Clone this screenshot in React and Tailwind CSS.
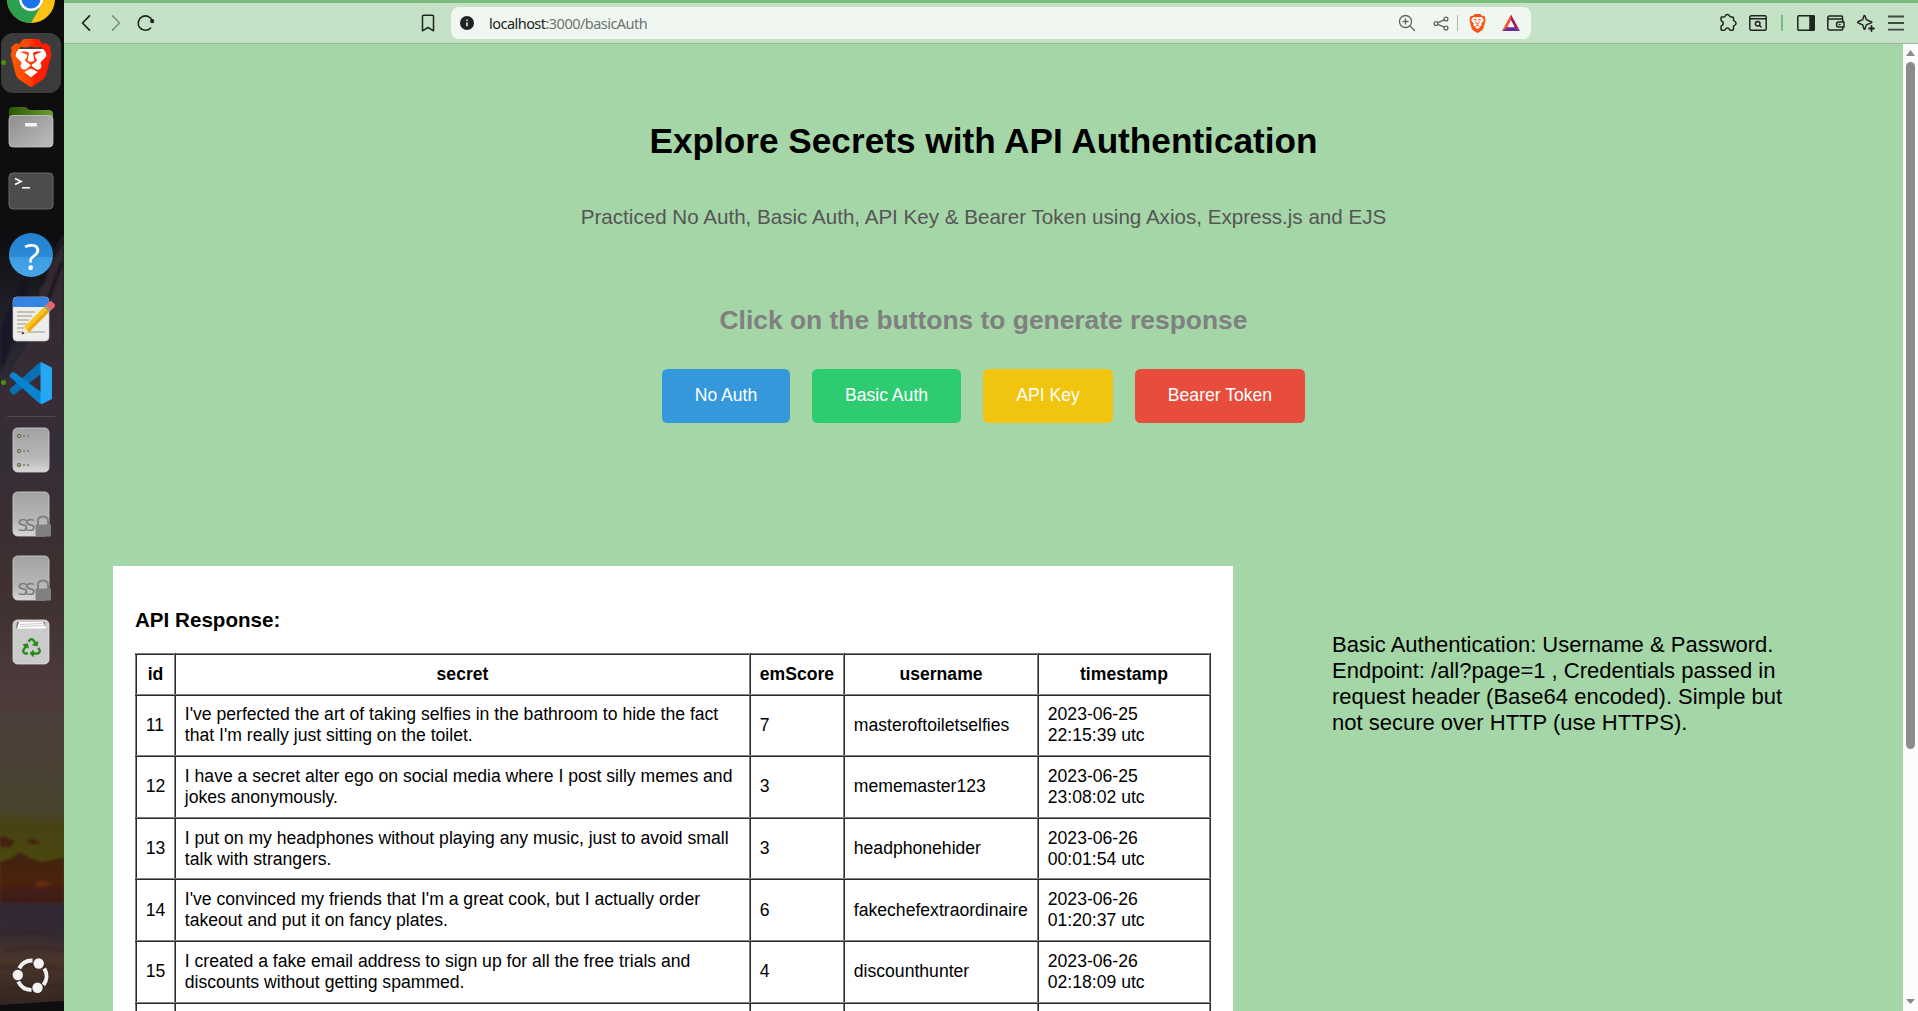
import { SiBrave } from "react-icons/si";
import { FaRecycle } from "react-icons/fa";

const ROWS = [
  { id: 11, secret: "I've perfected the art of taking selfies in the bathroom to hide the fact that I'm really just sitting on the toilet.", score: 7, user: "masteroftoiletselfies", date: "2023-06-25", time: "22:15:39 utc" },
  { id: 12, secret: "I have a secret alter ego on social media where I post silly memes and jokes anonymously.", score: 3, user: "mememaster123", date: "2023-06-25", time: "23:08:02 utc" },
  { id: 13, secret: "I put on my headphones without playing any music, just to avoid small talk with strangers.", score: 3, user: "headphonehider", date: "2023-06-26", time: "00:01:54 utc" },
  { id: 14, secret: "I've convinced my friends that I'm a great cook, but I actually order takeout and put it on fancy plates.", score: 6, user: "fakechefextraordinaire", date: "2023-06-26", time: "01:20:37 utc" },
  { id: 15, secret: "I created a fake email address to sign up for all the free trials and discounts without getting spammed.", score: 4, user: "discounthunter", date: "2023-06-26", time: "02:18:09 utc" },
];

const BUTTONS = [
  { label: "No Auth", style: "bg-[#3498db] w-[128px]" },
  { label: "Basic Auth", style: "bg-[#2ecc71] w-[149px]" },
  { label: "API Key", style: "bg-[#f1c40f] w-[130px]" },
  { label: "Bearer Token", style: "bg-[#e74c3c] w-[170px]" },
];

/* ---------- dock ---------- */

function DockSlot({ active, running, children }) {
  return (
    <div className="relative flex h-16 w-[62px] shrink-0 items-center justify-center">
      {active && <div className="absolute left-px top-[2px] h-[60px] w-[60px] rounded-[12px] bg-[#3c3c3c]" />}
      {running && <div className="absolute left-[1px] top-[29px] h-[5px] w-[5px] rounded-full bg-[#4e8c0a]" />}
      <div className="relative flex">{children}</div>
    </div>
  );
}

function ChromeIcon() {
  return (
    <svg width="48" height="48" viewBox="0 0 48 48">
      <circle cx="24" cy="24" r="24" fill="#fbc116" />
      <path d="M24 24 3.2 12A24 24 0 0 0 24 48L34.4 30Z" fill="#2da04e" />
      <path d="M24 24 3.2 12A24 24 0 0 1 44.8 12H24Z" fill="#e33b2e" />
      <circle cx="24" cy="24" r="12" fill="#fff" />
      <circle cx="24" cy="24" r="9.5" fill="#1a73e8" />
    </svg>
  );
}

function BraveDockIcon() {
  return (
    <div className="relative flex">
      <svg width="0" height="0" className="absolute">
        <defs>
          <linearGradient id="brave-shield" x1="0" x2="1">
            <stop offset="0.1" stopColor="#ff5500" />
            <stop offset="0.45" stopColor="#ff4505" />
            <stop offset="0.6" stopColor="#ff2200" />
            <stop offset="1" stopColor="#ff1a00" />
          </linearGradient>
        </defs>
      </svg>
      <svg className="absolute left-0 top-0" width="48" height="48" viewBox="0 0 48 48">
        <path d="M10 10H38L40 18 35 38 24 44 13 38 8 18Z" fill="#fff" />
      </svg>
      <SiBrave size={48} className="relative" style={{ fill: "url(#brave-shield)" }} />
    </div>
  );
}

function FilesIcon() {
  return (
    <svg width="46" height="42" viewBox="0 0 46 42">
      <defs>
        <linearGradient id="folder-front" x1="0" y1="0" x2="1" y2="1">
          <stop stopColor="#8e8e8e" />
          <stop offset="1" stopColor="#bdbdbd" />
        </linearGradient>
        <linearGradient id="folder-back" x1="0" x2="1">
          <stop stopColor="#2e5702" />
          <stop offset="1" stopColor="#6c9c34" />
        </linearGradient>
      </defs>
      <path d="M1 5Q1 1 5 1H16Q19 1 20 3 21 4 23 4H41Q45 4 45 8V20H1Z" fill="url(#folder-back)" />
      <rect x="1" y="9.500" width="44" height="31.500" rx="4" fill="url(#folder-front)" stroke="#c9c9c9" strokeWidth=".8" />
      <rect x="17" y="17" width="12" height="3.500" rx="1" fill="#f4f4f4" />
    </svg>
  );
}

function TerminalIcon() {
  return (
    <svg width="46" height="38" viewBox="0 0 46 38">
      <rect x="1" y="1" width="44" height="36" rx="4" fill="#4c4c4c" stroke="#686868" />
      <path d="M7 6.500 13 9.500 7 12.500" fill="none" stroke="#fff" strokeWidth="1.700" />
      <path d="M14 15.800H22" stroke="#fff" strokeWidth="1.500" />
    </svg>
  );
}

function HelpIcon() {
  return (
    <div className="flex h-11 w-11 items-center justify-center rounded-full bg-[linear-gradient(#2280d0_0%,#2b8bd8_54%,#3c9de2_55%,#47a6e6_100%)] pl-[2px] font-['Open_Sans','Noto_Sans',sans-serif] text-[37px] leading-none text-white">
      ?
    </div>
  );
}

function NotesIcon() {
  return (
    <svg width="48" height="46" viewBox="0 0 48 46">
      <rect x="6" y="1" width="36" height="44" rx="4" fill="#ededed" stroke="#c8c8c8" strokeWidth=".7" />
      <path d="M6 11V5Q6 1 10 1H38Q42 1 42 5V11Z" fill="#3584e4" />
      <path d="M10 16H28M10 20H25M10 24H22M10 28H20M10 32H17M10 36H38" stroke="#c5c1b5" strokeWidth="1.800" />
      <path d="M15 38 17 31 22 36Z" fill="#fbe3bd" />
      <path d="M17 31 37.500 10.500 42.500 15.500 22 36Z" fill="#f7c920" />
      <path d="M20 33.500 40 13.500 42.500 15.500 22 36Z" fill="#e9a80f" />
      <path d="M37 11 40 8 45 13 42 16Z" fill="#9a9996" />
      <path d="M39 9 42 6Q44 4.500 46 6.500L47 7.500Q49 9.500 47 11.500L44.500 14Z" fill="#ed6166" />
      <path d="M14.500 38.500 15.600 35.500 17.600 37.500Z" fill="#333" />
    </svg>
  );
}

function CodeIcon() {
  return (
    <svg width="44" height="44" viewBox="0 0 44 44">
      <path d="M32 1.500V13L5.500 33.500Q4 34 3 33L1 30.500Q0 29 1.500 27.500L30 2Z" fill="#0a6fb3" />
      <path d="M32 42.500V31L5.500 11.500Q4 10.500 3 11.500L1 13.500Q0 15 1.500 16.500L30 42Z" fill="#0884d0" />
      <path d="M32 1Q31.500 1 31.500 2V42Q31.500 43.500 33 43L42 38.500Q43 38 43 37V8Q43 6.500 42 6L33 1.500Z" fill="#25a7f1" />
    </svg>
  );
}

function DriveBody({ children }) {
  return (
    <svg width="40" height="46" viewBox="0 0 40 46" className="overflow-visible">
      <defs>
        <linearGradient id="drive" x1="0" y1="0" x2="0" y2="1">
          <stop stopColor="#a2a2a2" />
          <stop offset=".7" stopColor="#b8b8b8" />
          <stop offset="1" stopColor="#d8d8d8" />
        </linearGradient>
      </defs>
      <rect x="2" y="1" width="36" height="44" rx="4.500" fill="url(#drive)" stroke="#cacaca" strokeWidth=".9" />
      {children}
    </svg>
  );
}

function ServerIcon() {
  return (
    <DriveBody>
      {[9, 24, 38].map((y) => (
        <g key={y}>
          <circle cx="8" cy={y} r="1.700" fill="#9cba5c" stroke="#666" strokeWidth="1" />
          <path d={`M12 ${y}h2M16 ${y}h2`} stroke="#858585" strokeWidth="1.800" />
        </g>
      ))}
    </DriveBody>
  );
}

function SsdIcon() {
  return (
    <DriveBody>
      <text x="6.500" y="39.500" fontSize="16.500" fill="#777" className="font-['DejaVu_Sans',sans-serif]" textLength="18">SS</text>
      <path d="M27 34V30Q27 25.500 32 25.500T37 30V34" fill="none" stroke="#808080" strokeWidth="2" />
      <rect x="24.500" y="33.500" width="15.500" height="12" fill="#808080" />
    </DriveBody>
  );
}

function TrashIcon() {
  return (
    <div className="relative flex">
      <svg width="40" height="46" viewBox="0 0 40 46">
        <rect x="2" y="1" width="36" height="44" rx="4.500" fill="#cbcbcb" stroke="#e0e0e0" strokeWidth=".8" />
        <path d="M6 3H34V9H5Z" fill="#777" />
        <path d="M8 3H32L35 9.500H6Z" fill="#fff" />
        <path d="M9 5.500 31 4.500M9 7.500 33 6.500" stroke="#bbb" strokeWidth=".8" />
      </svg>
      <FaRecycle size={19} className="absolute left-[10.5px] top-[19px] text-[#29891f]" />
    </div>
  );
}

function UbuntuIcon() {
  return (
    <svg width="38" height="38" viewBox="0 0 38 38">
      <g fill="none" stroke="#f2f2f2" strokeWidth="4">
        <path d="M7.200 12.200A14.500 14.500 0 0 1 20.500 4.500" />
        <path d="M32.300 12.500A14.500 14.500 0 0 1 31.500 29" />
        <path d="M6.300 25.500A14.500 14.500 0 0 0 19.500 34" />
      </g>
      <g fill="#f2f2f2">
        <circle cx="5.800" cy="19" r="5.200" />
        <circle cx="26.700" cy="7.500" r="5.200" />
        <circle cx="25.500" cy="31.700" r="5.200" />
      </g>
    </svg>
  );
}

function Wallpaper() {
  return (
    <svg className="absolute inset-0" width="64" height="1011" viewBox="0 0 64 1011">
      <defs>
        <linearGradient id="sky" gradientUnits="userSpaceOnUse" x1="20" y1="0" x2="0" y2="1011">
          <stop offset="0" stopColor="#0d0d0d" />
          <stop offset=".23" stopColor="#0e0e11" />
          <stop offset=".32" stopColor="#23222c" />
          <stop offset=".40" stopColor="#332d36" />
          <stop offset=".45" stopColor="#352d37" />
          <stop offset=".58" stopColor="#3e302f" />
          <stop offset=".68" stopColor="#4c3b3b" />
          <stop offset=".75" stopColor="#4b4136" />
          <stop offset=".80" stopColor="#47442f" />
          <stop offset=".815" stopColor="#484214" />
          <stop offset=".85" stopColor="#4b470f" />
          <stop offset=".89" stopColor="#4b3011" />
          <stop offset=".895" stopColor="#302635" />
          <stop offset=".92" stopColor="#352932" />
          <stop offset=".95" stopColor="#49352a" />
          <stop offset="1" stopColor="#30241f" />
        </linearGradient>
        <linearGradient id="cloud" x1="0" y1="0" x2="0" y2="1">
          <stop stopColor="#402313" />
          <stop offset=".55" stopColor="#4c210d" />
          <stop offset="1" stopColor="#3b1d1c" />
        </linearGradient>
        <filter id="haze"><feGaussianBlur stdDeviation="1.200" /></filter>
      </defs>
      <rect width="64" height="1011" fill="url(#sky)" />
      <g filter="url(#haze)">
        <path d="M64 235 52 255 40 290 34 330 12 370 0 385V430H64Z" fill="#382f36" opacity=".75" />
        <path d="M30 275 22 320 4 365 0 372V330L18 290Z" fill="#0d1224" opacity=".7" />
        <path d="M64 240 50 262 42 285M62 262 48 300" stroke="#17161d" strokeWidth="3" fill="none" />
        <path d="M0 837Q8 837 15 842L10 847H0ZM26 841 34 839 40 843 32 844Z" fill="#42220f" />
        <path d="M0 862 12 858 20 852 30 858 40 862 52 860 64 857V903H0Z" fill="url(#cloud)" />
        <path d="M34 884 42 880 52 884 40 888Z" fill="#642c0a" />
        <path d="M0 935 30 932 64 936M5 950 40 947 64 951M0 968 40 965 64 970M0 990 64 984" stroke="#2c2429" strokeWidth="2" opacity=".6" fill="none" />
      </g>
      <path d="M0 1005 30 1003 64 1001V1011H0Z" fill="#0e0e0e" />
    </svg>
  );
}

function Dock() {
  return (
    <aside className="relative h-full w-16 shrink-0 overflow-hidden">
      <Wallpaper />
      <div className="relative flex h-full flex-col">
        <div className="-mt-[33px]"><DockSlot><ChromeIcon /></DockSlot></div>
        <DockSlot active running><BraveDockIcon /></DockSlot>
        <DockSlot><FilesIcon /></DockSlot>
        <DockSlot><TerminalIcon /></DockSlot>
        <DockSlot><HelpIcon /></DockSlot>
        <DockSlot><NotesIcon /></DockSlot>
        <DockSlot running><CodeIcon /></DockSlot>
        <div className="mb-px ml-[7px] mt-px h-px w-12 bg-[#504a4e]" />
        <DockSlot><ServerIcon /></DockSlot>
        <DockSlot><SsdIcon /></DockSlot>
        <DockSlot><SsdIcon /></DockSlot>
        <DockSlot><TrashIcon /></DockSlot>
        <div className="mb-[4px] mt-auto"><DockSlot><UbuntuIcon /></DockSlot></div>
      </div>
    </aside>
  );
}

/* ---------- browser toolbar ---------- */

function Glyph({ className = "text-[#1f2421]", children, width = 1.5 }) {
  return (
    <svg className={`shrink-0 ${className}`} width="20" height="20" viewBox="0 0 20 20" fill="none" stroke="currentColor" strokeWidth={width} strokeLinecap="round" strokeLinejoin="round">
      {children}
    </svg>
  );
}

function AddressBar() {
  return (
    <div className="ml-[13px] flex h-8 w-[1080px] shrink-0 items-center rounded-lg bg-[#f0f7f1] pl-[9px]">
      <svg width="14" height="14" viewBox="0 0 14 14">
        <circle cx="7" cy="7" r="7" fill="#1f2223" />
        <path d="M7 6.300V10.200M7 3.600V4.900" stroke="#e8eee9" strokeWidth="1.500" />
      </svg>
      <div className="ml-[15px] flex-1 whitespace-pre font-['Noto_Sans',sans-serif] text-[14.5px] leading-5 tracking-[-0.53px] text-[#6d7370]">
        <span className="text-[#202422]">localhost</span>:3000/basicAuth
      </div>
      <div className="flex items-center pr-[10px]">
        <Glyph className="text-[#5f6662]" width={1.3}>
          <circle cx="8.500" cy="8.500" r="6" />
          <path d="M13 13 17.500 17.500M8.500 6V11M6 8.500H11" />
        </Glyph>
        <Glyph className="ml-[14px] text-[#5f6662]" width={1.3}>
          <circle cx="5" cy="10.500" r="1.900" /><circle cx="15" cy="6" r="1.900" /><circle cx="15" cy="15" r="1.900" />
          <path d="M6.800 9.700 13.200 6.800M6.800 11.300 13.200 14.200" />
        </Glyph>
        <div className="ml-[6px] h-4 w-px bg-[#aab3ac]" />
        <div className="relative ml-[9px] flex h-[20px] w-5 items-center justify-center">
          <div className="absolute left-[4px] top-[4px] h-[12px] w-[12px] rounded-b-md bg-white" />
          <SiBrave size={19} className="relative text-[#fb5410]" />
        </div>
        <svg className="ml-[14px]" width="20" height="20" viewBox="0 0 20 20">
          <path d="M10 1.500 1 18 6.300 14.200 10 7Z" fill="#ff4f2a" />
          <path d="M10 1.500 19 18 13.700 14.200 10 7Z" fill="#9e1f63" />
          <path d="M1 18H19L13.700 14.200H6.300Z" fill="#662d91" />
        </svg>
      </div>
    </div>
  );
}

function Toolbar() {
  return (
    <header className="flex h-11 shrink-0 items-center border-b border-b-[#9db79f] border-t-[3px] border-t-[#7bbd7f] bg-[#c5e1c6] pl-3 pr-3">
      <div className="flex gap-[10px]">
        <Glyph width={1.700}><path d="M13.500 2.800 6.500 10 13.500 17.200" /></Glyph>
        <Glyph className="text-[#7f9681]" width={1.700}><path d="M6.500 2.800 13.500 10 6.500 17.200" /></Glyph>
        <Glyph width={1.600}>
          <path d="M14.700 15A7.200 7.200 0 1 1 16.300 8" />
          <circle cx="16.200" cy="8.200" r="1.300" fill="currentColor" />
        </Glyph>
      </div>
      <div className="ml-[262px] flex">
        <Glyph><path d="M4.500 3.200Q4.500 2.200 5.500 2.200H14.500Q15.500 2.200 15.500 3.200V17.800L10 14.500 4.500 17.800Z" /></Glyph>
      </div>
      <AddressBar />
      <div className="ml-auto flex items-center">
        <Glyph>
          <path d="M3.800 4H5.800Q7 4 7.200 3.100A2.300 2.300 0 0 1 11.600 3.100Q11.800 4 13 4H14.500Q15.500 4 15.500 5V6.800Q15.500 7.900 16.400 8.100A2.300 2.300 0 0 1 16.400 12.500Q15.500 12.700 15.500 13.700V16.300Q15.500 17.300 14.500 17.300H12.500Q11.600 17.300 11.400 16.400A2.100 2.100 0 0 0 7.400 16.400Q7.200 17.300 6.200 17.300H4Q3 17.300 3 16.300V13.700Q3 12.800 3.900 12.500A2.300 2.300 0 0 0 3.900 8.300Q3 8 3 7V5Q3 4 3.800 4Z" />
        </Glyph>
        <Glyph className="ml-[10px] text-[#1f2421]">
          <rect x="1.800" y="2.800" width="16.400" height="14.400" rx="1.500" />
          <path d="M2 5.700H18" />
          <circle cx="9.700" cy="10.700" r="2.300" /><path d="M11.500 12.500 13 14" />
        </Glyph>
        <div className="ml-[13px] h-4 w-[2px] bg-[#79bd7d]" />
        <Glyph className="ml-[13px] text-[#1f2421]">
          <rect x="1.800" y="2.800" width="16.400" height="14.400" rx="1" />
          <path d="M14 3H18V17H14Z" fill="currentColor" />
        </Glyph>
        <Glyph className="ml-[10px] text-[#1f2421]">
          <path d="M16.500 6V4Q16.500 3 15.500 3H3.500Q1.800 3 1.800 4.700V15.500Q1.800 17 3.500 17H15.500Q16.800 17 16.800 15.500V14M2 5.500Q2.500 6 3.500 6H15.500Q16.800 6 16.800 7.500V8.800" />
          <path d="M18 9H12.500Q10.500 9 10.500 11.500T12.500 14H18ZM13.300 11.500H14" />
        </Glyph>
        <Glyph className="ml-[10px] text-[#1f2421]" width={1.4}>
          <path d="M8.500 2.500Q9 2.500 9.300 3.500L10.300 6.700 13.500 8Q16 8.700 16 9.300T13.500 10.500L10.300 11.800 9.300 15Q9 16.300 8.500 16.300T7.700 15L6.700 11.800 3.500 10.500Q1.500 9.800 1.500 9.300T3.500 8L6.700 6.700 7.700 3.500Q8 2.500 8.500 2.500Z" />
          <path d="M15.500 13V18M13 15.500H18" strokeWidth="1.800" />
        </Glyph>
        <Glyph className="ml-[10px] text-[#404a42]" width={1.8}><path d="M2 3.500H18M2 10H18M2 16.700H18" strokeLinecap="butt" /></Glyph>
      </div>
    </header>
  );
}

function Scrollbar() {
  return (
    <div className="flex w-[15px] shrink-0 flex-col items-center bg-[#fcfcfc]">
      <svg className="mt-[6px] shrink-0" width="9" height="6" viewBox="0 0 9 6"><path d="M4.500 0 9 6H0Z" fill="#8b8b8b" /></svg>
      <div className="mt-[6px] h-[687px] w-[9px] shrink-0 rounded-full bg-[#8b8b8b]" />
      <svg className="mb-[7px] mt-auto shrink-0" width="9" height="5" viewBox="0 0 9 5"><path d="M0 0H9L4.500 5Z" fill="#8b8b8b" /></svg>
    </div>
  );
}

/* ---------- page ---------- */

const CELL = "border-2 border-[gray] p-[8.8px] [border-style:inset]";

function ResponseTable() {
  return (
    <table className="w-full table-fixed border-collapse border-2 border-[gray] text-[17.6px] leading-[21px] [border-style:outset]">
      <colgroup>
        <col className="w-[39px]" />
        <col className="w-[575px]" />
        <col className="w-[94px]" />
        <col className="w-[194px]" />
        <col />
      </colgroup>
      <thead>
        <tr>
          {["id", "secret", "emScore", "username", "timestamp"].map((name) => (
            <th key={name} className={`${CELL} text-center font-bold`}>{name}</th>
          ))}
        </tr>
      </thead>
      <tbody>
        {ROWS.map((row) => (
          <tr key={row.id}>
            <td className={CELL}>{row.id}</td>
            <td className={CELL}>{row.secret}</td>
            <td className={CELL}>{row.score}</td>
            <td className={CELL}>{row.user}</td>
            <td className={CELL}>{row.date}<br />{row.time}</td>
          </tr>
        ))}
        <tr>
          {[0, 1, 2, 3, 4].map((n) => (
            <td key={n} className={`${CELL} h-[62px]`} />
          ))}
        </tr>
      </tbody>
    </table>
  );
}

function Page() {
  return (
    <main className="flex min-w-0 flex-1 flex-col overflow-hidden bg-[#a5d6a7] font-['Liberation_Sans',Arial,sans-serif] text-black">
      <div className="flex flex-col items-center">
        <h1 className="mt-[76px] text-[35.2px] font-bold leading-[42px]">Explore Secrets with API Authentication</h1>
        <p className="mt-[43px] text-[20.6px] leading-6 text-[#555]">
          Practiced No Auth, Basic Auth, API Key &amp; Bearer Token using Axios, Express.js and EJS
        </p>
        <h2 className="mt-[75px] text-[26.4px] font-bold leading-[32px] text-[gray]">Click on the buttons to generate response</h2>
        <div className="mt-[33px] flex gap-[22px]">
          {BUTTONS.map((b) => (
            <button key={b.label} className={`h-[54px] rounded-[5.5px] pb-px text-[17.6px] text-white ${b.style}`}>{b.label}</button>
          ))}
        </div>
      </div>
      <div className="mt-[143px] flex items-start">
        <section className="ml-[49px] w-[1120px] shrink-0 bg-white px-[22px] pb-10 pt-[42px]">
          <h3 className="mb-[21px] text-[20.6px] font-bold leading-6">API Response:</h3>
          <ResponseTable />
        </section>
        <p className="ml-[99px] mt-[66px] w-[470px] text-[22px] leading-[26px]">
          Basic Authentication: Username &amp; Password. Endpoint: /all?page=1 , Credentials passed in request header (Base64 encoded). Simple but not secure over HTTP (use HTTPS).
        </p>
      </div>
    </main>
  );
}

export default function App() {
  return (
    <div className="flex h-[1011px] w-[1918px] overflow-hidden">
      <Dock />
      <div className="flex min-w-0 flex-1 flex-col">
        <Toolbar />
        <div className="flex min-h-0 flex-1">
          <Page />
          <Scrollbar />
        </div>
      </div>
    </div>
  );
}
